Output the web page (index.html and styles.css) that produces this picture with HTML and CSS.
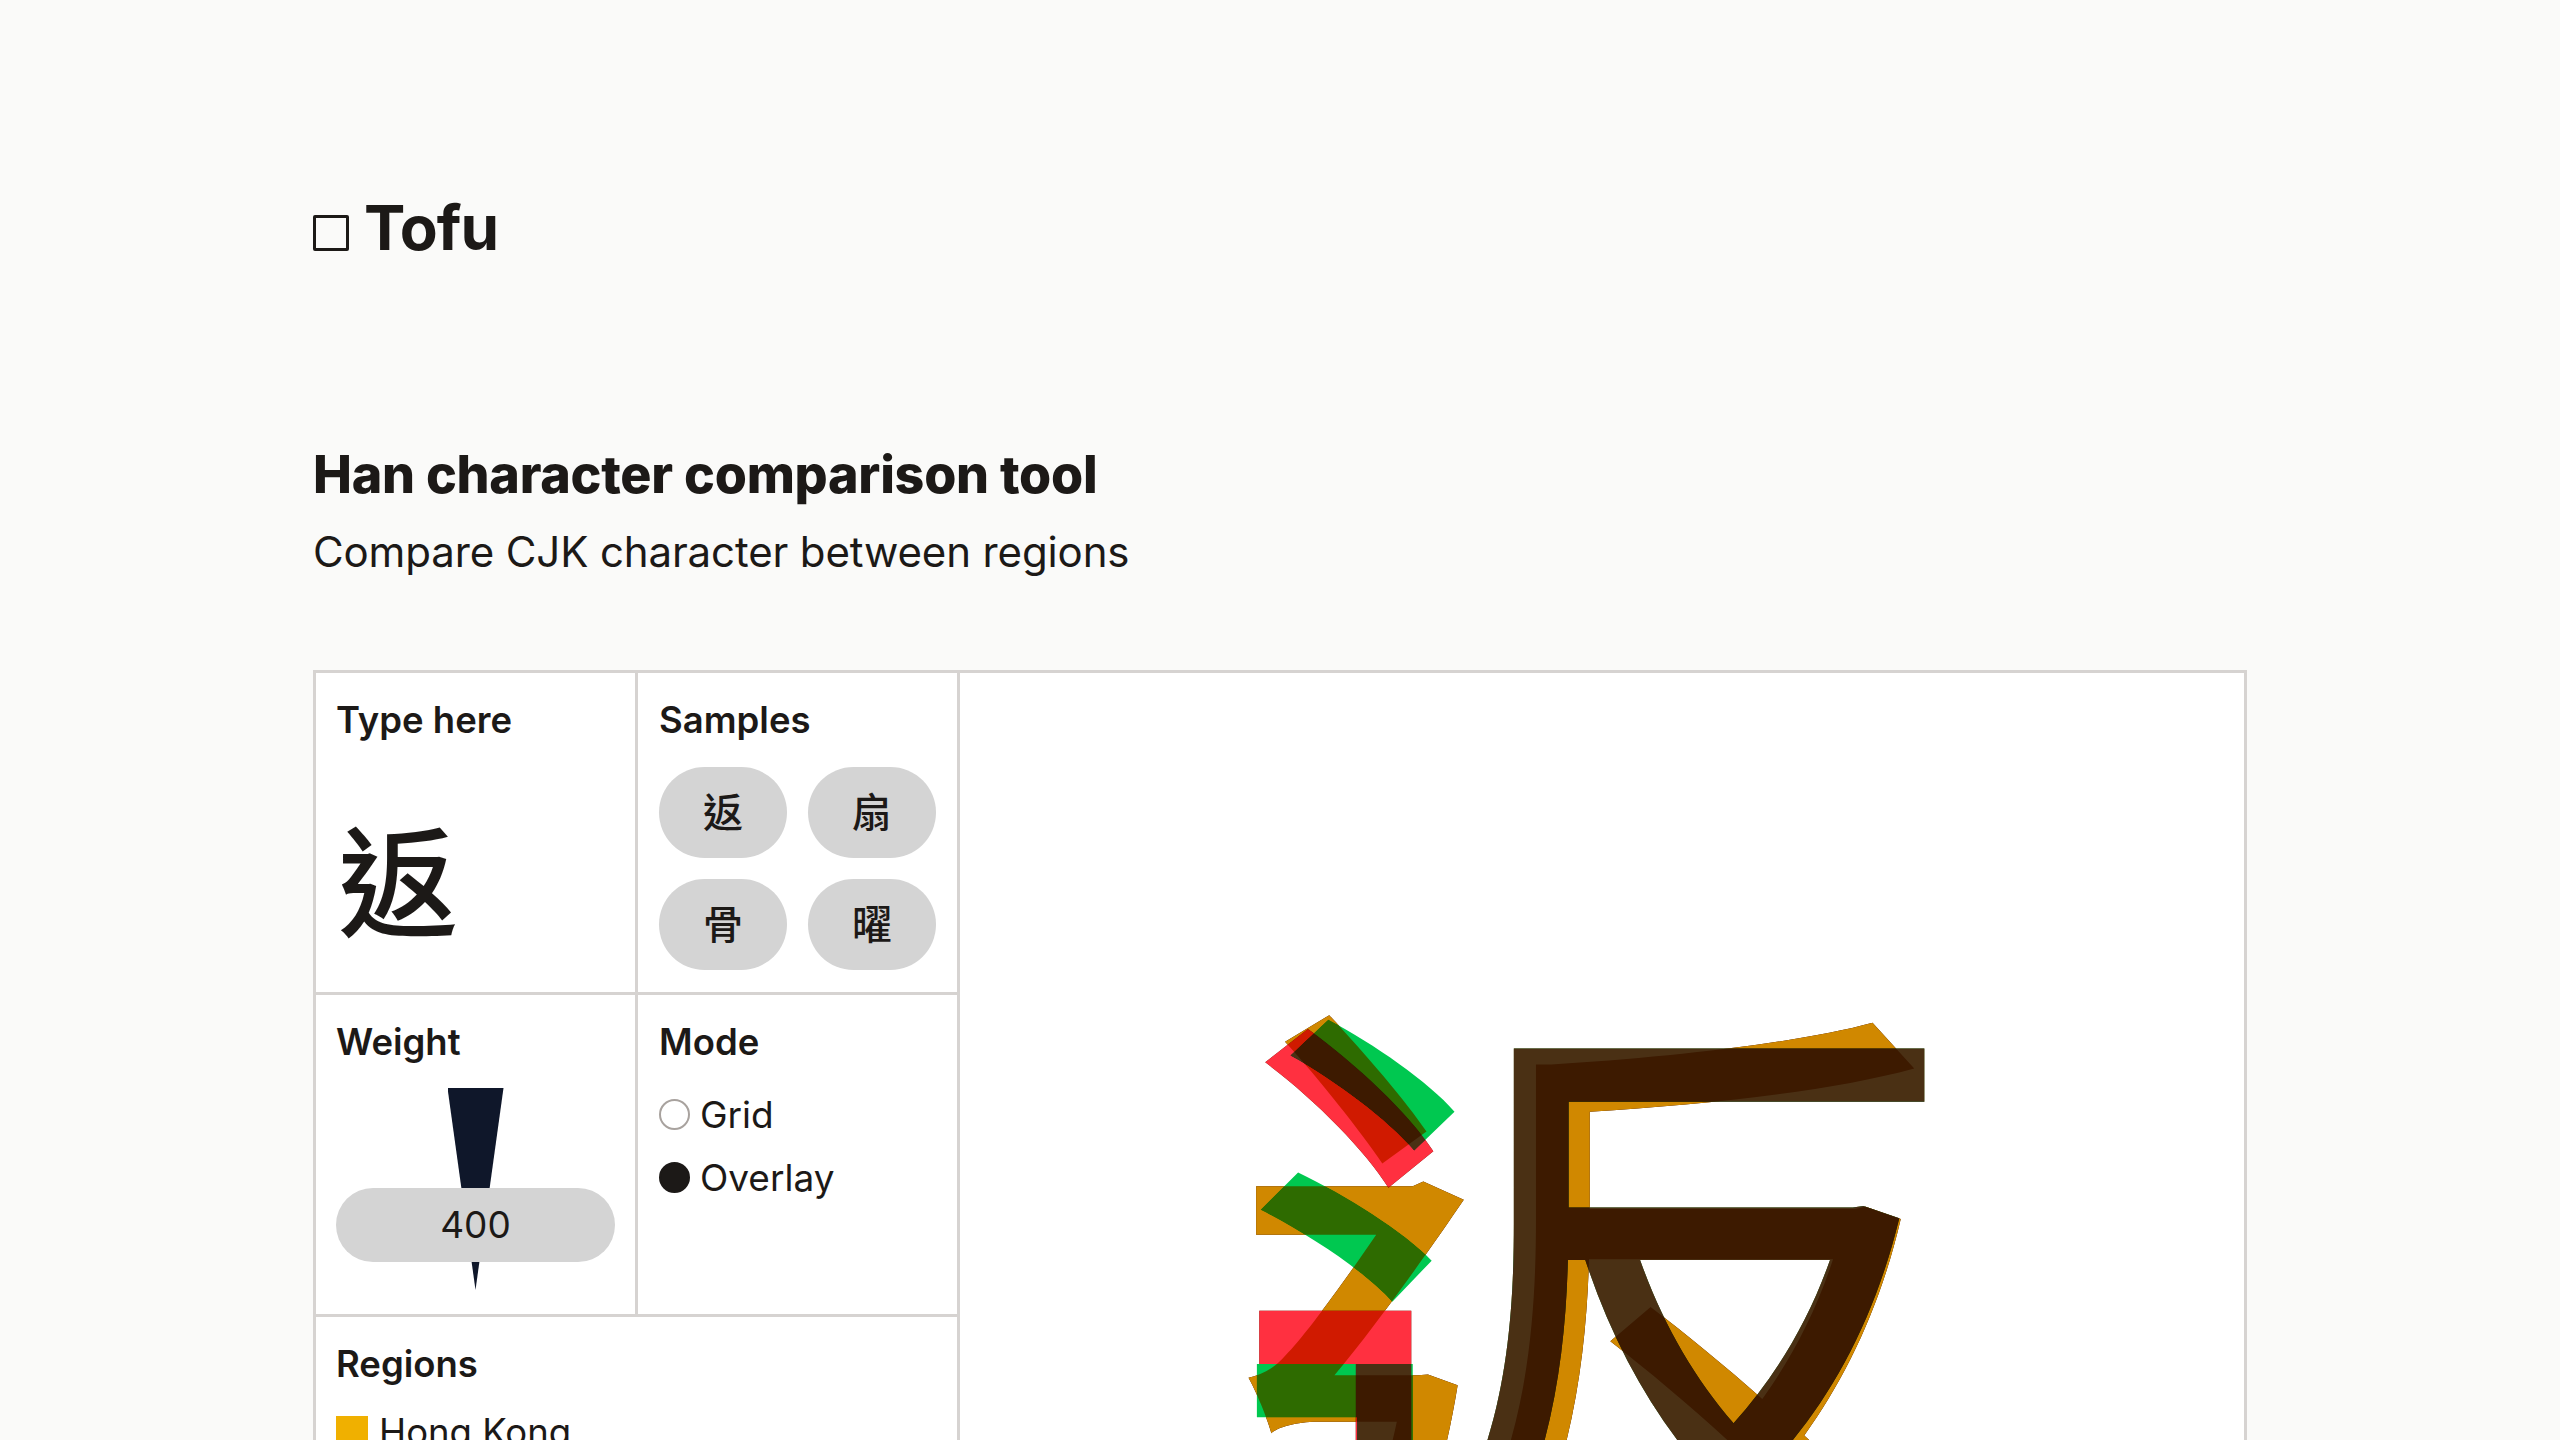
FILE: index.html
```html
<!DOCTYPE html>
<html lang="en">
<head>
    <meta charset="UTF-8">
    <title>Tofu</title>
    <link rel="stylesheet" href="styles.css">
</head>
<body>
    <header class="logo"><span class="logo-box"></span><span>Tofu</span></header>
    <h1>Han character comparison tool</h1>
    <p class="lead">Compare CJK character between regions</p>

    <div class="tool">
        <div class="controls">
            <div class="cell">
                <h2>Type here</h2>
                <div class="type-char" lang="zh-HK">返</div>
            </div>
            <div class="cell">
                <h2>Samples</h2>
                <div class="samples">
                    <button lang="zh-HK">返</button>
                    <button lang="zh-HK">扇</button>
                    <button lang="zh-HK">骨</button>
                    <button lang="zh-HK">曜</button>
                </div>
            </div>
            <div class="cell">
                <h2>Weight</h2>
                <div class="slider">
                    <div class="wedge"></div>
                    <div class="thumb">400</div>
                </div>
            </div>
            <div class="cell">
                <h2>Mode</h2>
                <div class="radio"><span class="dot"></span>Grid</div>
                <div class="radio"><span class="dot on"></span>Overlay</div>
            </div>
            <div class="cell wide">
                <h2>Regions</h2>
                <div class="region"><span class="swatch"></span>Hong Kong</div>
            </div>
        </div>
        <div class="stage">
            <span class="layer jp" lang="ja">返</span>
            <span class="layer kr" lang="ko">返</span>
            <span class="layer jp-lift" lang="ja">返</span>
            <span class="layer hk" lang="zh-HK">返</span>
            <span class="layer hk-lift" lang="zh-HK">返</span>
        </div>
    </div>
</body>
</html>
```

FILE: styles.css
```css
* {
    box-sizing: border-box;
}
html, body {
    height: 1440px;
    overflow: hidden;
}
body {
    margin: 0;
    padding: 195px 313px 0;
    background: #fafaf9;
    color: #1c1917;
    font-family: Inter, "Noto Sans CJK TC", sans-serif;
}
.logo {
    display: flex;
    align-items: flex-end;
    gap: 15px;
    font-size: 62px;
    font-weight: 700;
    line-height: 66px;
    letter-spacing: -0.9px;
}
.logo-box {
    width: 36px;
    height: 36px;
    margin-bottom: 10px;
    border: 3px solid #1c1917;
    border-radius: 2px;
}
h1 {
    margin: 183px 0 0;
    font-size: 52px;
    font-weight: 800;
    line-height: 62px;
    letter-spacing: -0.26px;
}
.lead {
    margin: 18px 0 0;
    font-size: 42px;
    line-height: 56px;
    letter-spacing: -0.13px;
}
.tool {
    display: flex;
    margin-top: 90px;
    height: 1400px;
    border: 3px solid #d6d3d1;
    background: #fff;
}
.controls {
    display: grid;
    grid-template-columns: 322px 322px;
    grid-auto-rows: 322px;
    flex: none;
}
.cell {
    padding: 25px 20px;
    border-right: 3px solid #d6d3d1;
    border-bottom: 3px solid #d6d3d1;
}
.cell:nth-child(even) {
    padding-left: 21px;
}
.wide {
    grid-column: span 2;
}
h2 {
    margin: 0;
    font-size: 36.5px;
    font-weight: 600;
    line-height: 44px;
}
.type-char {
    margin: 73px 0 0 2px;
    font-size: 120px;
    font-weight: 500;
    line-height: 140px;
}
.samples {
    display: grid;
    grid-template-columns: 128px 128px;
    grid-auto-rows: 91px;
    gap: 21px;
    margin-top: 25px;
}
.samples button {
    padding: 0 0 6px;
    border: none;
    border-radius: 46px;
    background: #d4d4d4;
    color: #1c1917;
    font-family: "Noto Sans CJK TC", sans-serif;
    font-size: 40px;
    font-weight: 500;
}
.slider {
    position: relative;
    height: 202px;
    margin-top: 24px;
}
.wedge {
    width: 56px;
    height: 202px;
    margin: 0 auto;
    background: #0f172a;
    clip-path: polygon(0 0, 100% 0, 50% 100%);
}
.thumb {
    position: absolute;
    left: 0;
    right: 0;
    top: 100px;
    height: 74px;
    border-radius: 37px;
    background: #d4d4d4;
    font-size: 37px;
    line-height: 74px;
    text-align: center;
}
.radio {
    display: flex;
    align-items: center;
    gap: 10px;
    height: 63px;
    font-size: 37px;
}
.radio:first-of-type {
    margin-top: 19px;
}
.dot {
    width: 31px;
    height: 31px;
    border: 2px solid #a8a29e;
    border-radius: 50%;
}
.dot.on {
    background: #1c1917;
    border-color: #1c1917;
}
.region {
    display: flex;
    align-items: center;
    gap: 11px;
    margin-top: 24px;
    font-size: 36.5px;
}
.swatch {
    width: 32px;
    height: 32px;
    background: #f0b000;
}
/* the layers share one grid cell and stack, centred in the panel */
.stage {
    display: grid;
    justify-items: center;
    align-content: start;
    flex: 1;
    padding-top: 265px;
    overflow: hidden;
    isolation: isolate;
}
.layer {
    grid-area: 1 / 1;
    font-size: 760px;
    line-height: 1;
    mix-blend-mode: multiply;
}
.jp, .jp-lift {
    font-family: "Noto Sans CJK JP", sans-serif;
}
.kr {
    font-family: "Noto Sans CJK KR", sans-serif;
}
.hk, .hk-lift {
    font-family: "Noto Sans CJK TC", sans-serif;
}
.jp { color: #ff3040; }
.kr { color: #00c850; }
.hk { color: #d08800; }
/* overlaps in the original are browner than plain multiply gives */
.jp-lift {
    color: #4a3010;
    mix-blend-mode: lighten;
}
.hk-lift {
    color: #2e0000;
    mix-blend-mode: lighten;
}
```
